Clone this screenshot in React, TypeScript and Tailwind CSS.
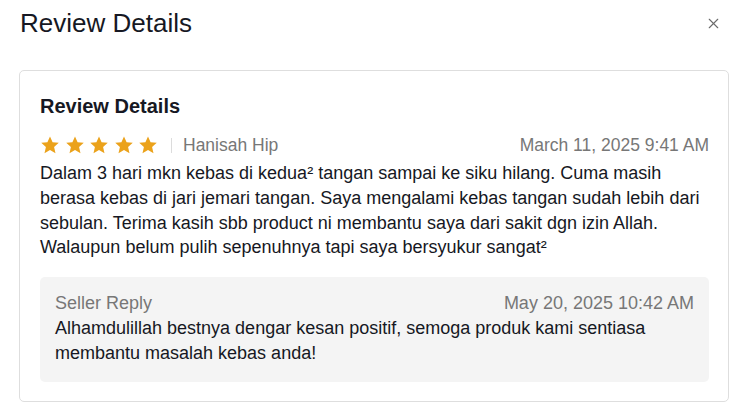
import { X } from "lucide-react";

const Star = () => (
  <svg viewBox="0 0 24 24" className="w-[20px] h-[20px]" fill="#eba21b">
    <path d="M12 1.8l3.1 6.9 7.4.7-5.6 5 1.7 7.4L12 18l-6.6 3.8 1.7-7.4-5.6-5 7.4-.7z" />
  </svg>
);

export default function App() {
  return (
    <div className="w-[749px] h-[414px] bg-white text-[#161823] font-['Liberation_Sans',Arial,sans-serif]">
      <div className="flex items-center justify-between pl-[20px] pr-[27px] pt-[6px] h-[40px]">
        <h2 className="text-[26px] leading-[32px]">Review Details</h2>
        <X className="w-[17px] h-[17px] text-[#6b6b6b]" strokeWidth={1.6} />
      </div>

      <div className="ml-[19px] w-[710px] mt-[30px] border border-[#dedede] rounded-[5px] pl-[20px] pr-[19px] pt-[22px] pb-[19px]">
        <h3 className="text-[20px] font-semibold leading-[26px]">Review Details</h3>

        <div className="flex items-center justify-between mt-[13px] h-[26px]">
          <div className="flex items-center">
            <div className="flex gap-[4.5px]">
              <Star />
              <Star />
              <Star />
              <Star />
              <Star />
            </div>
            <div className="w-px h-[15px] bg-[#dcdcdc] ml-[13px] mr-[11px]" />
            <span className="text-[17.5px] text-[#777]">Hanisah Hip</span>
          </div>
          <span className="text-[17.5px] text-[#777]">March 11, 2025 9:41 AM</span>
        </div>

        <p className="text-[18px] leading-[24.75px] mt-[3px] whitespace-nowrap">
          Dalam 3 hari mkn kebas di kedua² tangan sampai ke siku hilang. Cuma masih
          <br />
          berasa kebas di jari jemari tangan. Saya mengalami kebas tangan sudah lebih dari
          <br />
          sebulan. Terima kasih sbb product ni membantu saya dari sakit dgn izin Allah.
          <br />
          Walaupun belum pulih sepenuhnya tapi saya bersyukur sangat²
        </p>

        <div className="mt-[17px] bg-[#f4f4f4] rounded-[5px] px-[15px] pt-[14px] pb-[16px]">
          <div className="flex items-center justify-between text-[18px] text-[#777] leading-[25px]">
            <span>Seller Reply</span>
            <span>May 20, 2025 10:42 AM</span>
          </div>
          <p className="text-[18px] leading-[25px]">
            Alhamdulillah bestnya dengar kesan positif, semoga produk kami sentiasa
            <br />
            membantu masalah kebas anda!
          </p>
        </div>
      </div>
    </div>
  );
}
